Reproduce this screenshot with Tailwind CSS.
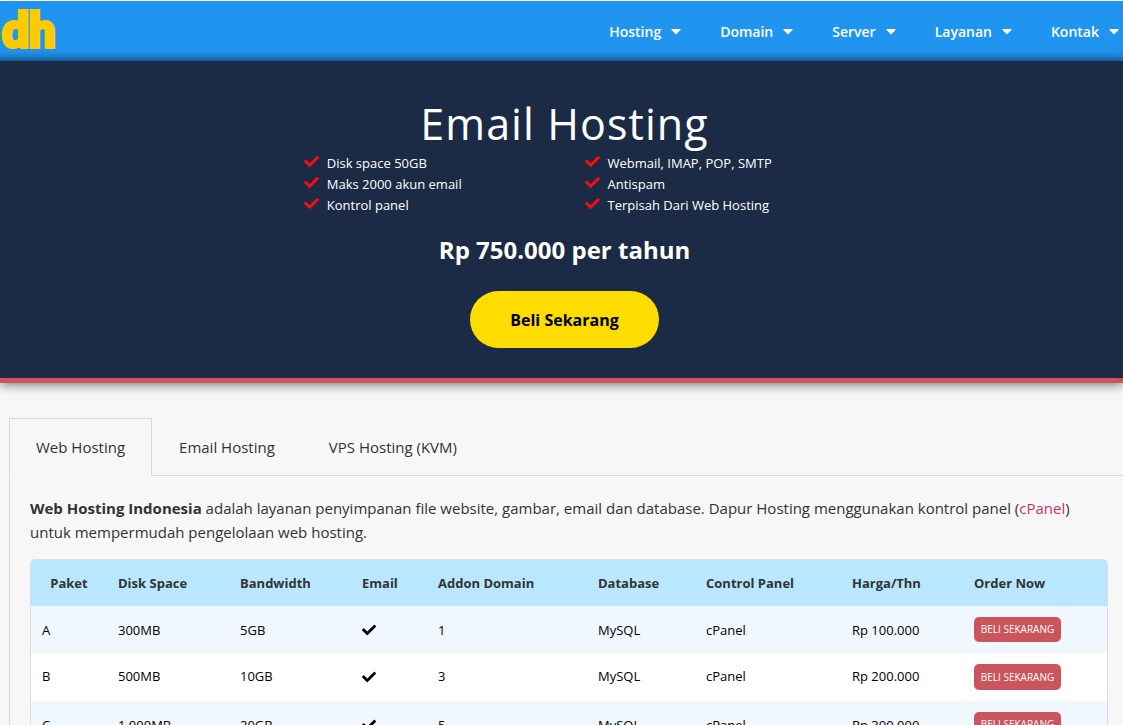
<!DOCTYPE html>
<html lang="id">
  <head>
    <meta charset="UTF-8" />
    <meta name="viewport" content="width=device-width, initial-scale=1.0" />
    <title>Email Hosting - Dapur Hosting</title>
    <script src="https://cdn.jsdelivr.net/npm/@tailwindcss/browser@4"></script>
  </head>
  <body class="bg-[#f7f7f7] font-['Segoe_UI','Open_Sans',sans-serif] text-[#333]">
    <!-- shared icons -->
    <svg class="hidden">
      <symbol id="check" viewBox="0 0 512 512">
        <path d="M173.898 439.404l-166.4-166.4c-9.997-9.997-9.997-26.206 0-36.204l36.203-36.204c9.997-9.998 26.207-9.998 36.204 0L192 312.69 432.095 72.596c9.997-9.997 26.207-9.997 36.204 0l36.203 36.204c9.997 9.997 9.997 26.206 0 36.204l-294.4 294.401c-9.998 9.997-26.207 9.997-36.204-.001z" />
      </symbol>
      <symbol id="caret" viewBox="0 0 320 512">
        <path d="M31.3 192h257.3c17.8 0 26.7 21.5 14.1 34.1L174.1 354.8c-7.8 7.8-20.5 7.8-28.3 0L17.2 226.1C4.6 213.5 13.5 192 31.3 192z" />
      </symbol>
    </svg>

    <header class="flex h-[61px] items-center justify-between border-t border-white bg-[#2095f0] pr-1 shadow-[inset_0_-10px_10px_-8px_rgba(0,0,0,0.4)]">
      <a href="#" aria-label="Dapur Hosting">
        <svg class="h-[60px] w-[60px] fill-[#fbca00] stroke-[#fbca00]" viewBox="0 0 60 60">
          <text x="2" y="46" font-family="Lato" font-weight="900" font-size="47" stroke-width="4">dh</text>
        </svg>
      </a>
      <nav class="flex gap-[39px] text-[14px] font-semibold text-white">
        <a href="#" class="flex items-center gap-2.5">Hosting <svg class="h-4 w-2.5 fill-white"><use href="#caret" /></svg></a>
        <a href="#" class="flex items-center gap-2.5">Domain <svg class="h-4 w-2.5 fill-white"><use href="#caret" /></svg></a>
        <a href="#" class="flex items-center gap-2.5">Server <svg class="h-4 w-2.5 fill-white"><use href="#caret" /></svg></a>
        <a href="#" class="flex items-center gap-2.5">Layanan <svg class="h-4 w-2.5 fill-white"><use href="#caret" /></svg></a>
        <a href="#" class="flex items-center gap-2.5">Kontak <svg class="h-4 w-2.5 fill-white"><use href="#caret" /></svg></a>
      </nav>
    </header>

    <section class="border-b-[5px] border-[#cb555c] bg-[#1b2b45] pt-[35px] pb-[30px] text-white shadow-[0_2px_10px_rgba(0,0,0,0.5)]">
      <h1 class="pb-0.5 pl-1.5 text-center text-[43px] leading-[55px] tracking-wide">Email Hosting</h1>
      <div class="mx-auto grid w-1/2 grid-cols-2 text-[13px] leading-[21px]">
        <ul class="pl-[23px]">
          <li class="flex gap-2"><svg class="mt-px h-[15px] w-[15px] fill-[#ff0a12]"><use href="#check" /></svg>Disk space 50GB</li>
          <li class="flex gap-2"><svg class="mt-px h-[15px] w-[15px] fill-[#ff0a12]"><use href="#check" /></svg>Maks 2000 akun email</li>
          <li class="flex gap-2"><svg class="mt-px h-[15px] w-[15px] fill-[#ff0a12]"><use href="#check" /></svg>Kontrol panel</li>
        </ul>
        <ul class="pl-[23px]">
          <li class="flex gap-2"><svg class="mt-px h-[15px] w-[15px] fill-[#ff0a12]"><use href="#check" /></svg>Webmail, IMAP, POP, SMTP</li>
          <li class="flex gap-2"><svg class="mt-px h-[15px] w-[15px] fill-[#ff0a12]"><use href="#check" /></svg>Antispam</li>
          <li class="flex gap-2"><svg class="mt-px h-[15px] w-[15px] fill-[#ff0a12]"><use href="#check" /></svg>Terpisah Dari Web Hosting</li>
        </ul>
      </div>
      <p class="mt-[15px] pl-1.5 text-center text-[24px] leading-[38px] font-bold">Rp 750.000 per tahun</p>
      <div class="mt-[22px] flex justify-center pl-1.5">
        <button class="h-[57px] w-[189px] rounded-full bg-[#fddc00] text-[16px] font-bold text-black">Beli Sekarang</button>
      </div>
    </section>

    <main class="pt-[35px] pl-[9px]">
      <div class="flex text-[15px] leading-6" role="tablist">
        <button role="tab" aria-selected="true" class="h-[58px] border border-[#d5d8dc] border-b-transparent px-[26px]">Web Hosting</button>
        <button role="tab" class="h-[58px] border-b border-[#d5d8dc] px-[27px]">Email Hosting</button>
        <button role="tab" class="h-[58px] border-b border-[#d5d8dc] px-[27px]">VPS Hosting (KVM)</button>
        <div class="flex-1 border-b border-[#d5d8dc]"></div>
      </div>

      <div class="border-l border-[#d5d8dc] pt-5 pr-[15px] pl-5" role="tabpanel">
        <p class="text-[15px] leading-6">
          <strong>Web Hosting Indonesia</strong> adalah layanan penyimpanan file website, gambar, email dan database. Dapur Hosting menggunakan kontrol panel (<a href="#" class="text-[#cc3366]">cPanel</a>) untuk mempermudah pengelolaan web hosting.
        </p>
        <div class="mt-[15px] overflow-hidden rounded-t-[5px] border border-[#ddd]">
          <table class="w-full table-fixed text-left text-[13px] text-black">
            <thead class="bg-[#b8e7ff] text-[#333]">
              <tr class="h-[46px]">
                <th class="w-[76px] pt-0.5 text-center">Paket</th>
                <th class="w-[122px] pt-0.5 pl-[11px]">Disk Space</th>
                <th class="w-[122px] pt-0.5 pl-[11px]">Bandwidth</th>
                <th class="w-[76px] pt-0.5 pl-[11px]">Email</th>
                <th class="w-[160px] pt-0.5 pl-[11px]">Addon Domain</th>
                <th class="w-[108px] pt-0.5 pl-[11px]">Database</th>
                <th class="w-[146px] pt-0.5 pl-[11px]">Control Panel</th>
                <th class="w-[122px] pt-0.5 pl-[11px]">Harga/Thn</th>
                <th class="w-[144px] pt-0.5 pl-[11px]">Order Now</th>
              </tr>
            </thead>
            <tbody>
              <tr class="h-[47px] bg-[#f0f7ff]">
                <td class="pt-0.5 pl-[11px]">A</td>
                <td class="pt-0.5 pl-[11px]">300MB</td>
                <td class="pt-0.5 pl-[11px]">5GB</td>
                <td class="pl-[11px]"><svg class="h-[14px] w-[14px]"><use href="#check" /></svg></td>
                <td class="pt-0.5 pl-[11px]">1</td>
                <td class="pt-0.5 pl-[11px]">MySQL</td>
                <td class="pt-0.5 pl-[11px]">cPanel</td>
                <td class="pt-0.5 pl-[11px]">Rp 100.000</td>
                <td class="pl-[11px]"><button class="block h-[25px] w-[87px] rounded-[5px] bg-[#cb555c] text-[10px] text-white">BELI SEKARANG</button></td>
              </tr>
              <tr class="h-[48px] bg-white">
                <td class="pl-[11px]">B</td>
                <td class="pl-[11px]">500MB</td>
                <td class="pl-[11px]">10GB</td>
                <td class="pl-[11px]"><svg class="h-[14px] w-[14px]"><use href="#check" /></svg></td>
                <td class="pl-[11px]">3</td>
                <td class="pl-[11px]">MySQL</td>
                <td class="pl-[11px]">cPanel</td>
                <td class="pl-[11px]">Rp 200.000</td>
                <td class="pl-[11px]"><button class="block h-[26px] w-[87px] rounded-[5px] bg-[#cb555c] text-[10px] text-white">BELI SEKARANG</button></td>
              </tr>
              <tr class="h-[47px] bg-[#f0f7ff]">
                <td class="pt-0.5 pl-[11px]">C</td>
                <td class="pt-0.5 pl-[11px]">1.000MB</td>
                <td class="pt-0.5 pl-[11px]">20GB</td>
                <td class="pl-[11px]"><svg class="h-[14px] w-[14px]"><use href="#check" /></svg></td>
                <td class="pt-0.5 pl-[11px]">5</td>
                <td class="pt-0.5 pl-[11px]">MySQL</td>
                <td class="pt-0.5 pl-[11px]">cPanel</td>
                <td class="pt-0.5 pl-[11px]">Rp 300.000</td>
                <td class="pl-[11px]"><button class="block h-[25px] w-[87px] rounded-[5px] bg-[#cb555c] text-[10px] text-white">BELI SEKARANG</button></td>
              </tr>
            </tbody>
          </table>
        </div>
      </div>
    </main>
  </body>
</html>
